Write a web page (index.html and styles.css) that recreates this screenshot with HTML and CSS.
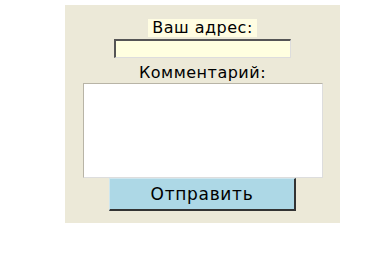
FILE: index.html
```html
<!DOCTYPE html>
<html lang="ru">
<head>
    <meta charset="UTF-8">
    <title>Обратная связь</title>
    <link rel="stylesheet" href="styles.css">
</head>
<body>
    <form class="feedback">
        <label class="label address" for="email">Ваш адрес:</label>
        <input id="email" class="field" type="text">
        <label class="label" for="comment">Комментарий:</label>
        <textarea id="comment" class="comment"></textarea>
        <button type="button" class="send">Отправить</button>
    </form>
</body>
</html>
```

FILE: styles.css
```css
body {
    margin: 0;
    background-color: #fff;
    font-family: 'DejaVu Sans', Verdana, sans-serif;
}

.feedback {
    box-sizing: border-box;
    width: 275px;
    height: 218px;
    margin: 5px 0 0 65px;
    padding-top: 14px;
    background-color: #ece9d8;
    display: flex;
    flex-direction: column;
    align-items: center;
}

.label {
    font-size: 16px;
    letter-spacing: 0.5px;
    line-height: 18px;
    color: #000;
    padding: 0 4px;
}

.label.address {
    background-color: #fffde2;
}

.field {
    box-sizing: border-box;
    width: 177px;
    height: 19px;
    margin: 2px 0 6px;
    background-color: #ffffe0;
    border-style: solid;
    border-width: 2px 1px 1px 2px;
    border-color: #555 #ddd #ddd #555;
    padding: 0;
}

.comment {
    box-sizing: border-box;
    width: 240px;
    height: 95px;
    margin-top: 1px;
    border: 1px solid #b8b4a6;
    border-right-color: #ddd;
    border-bottom-color: #ddd;
    background-color: #fff;
    resize: none;
    padding: 0;
}

.send {
    box-sizing: border-box;
    width: 187px;
    height: 33px;
    margin-top: 0;
    background-color: #add8e6;
    border-style: solid;
    border-width: 1px 2px 2px 1px;
    border-color: #cfe6ee #333 #333 #cfe6ee;
    font-family: 'DejaVu Sans', Verdana, sans-serif;
    font-size: 17px;
    letter-spacing: 0.7px;
    color: #000;
    cursor: pointer;
}
```
